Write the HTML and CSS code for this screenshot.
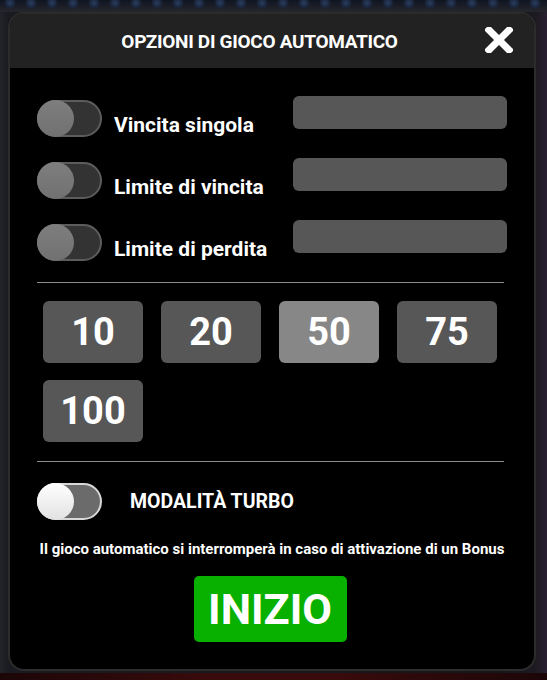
FILE: index.html
```html
<!DOCTYPE html>
<html lang="it">
<head>
    <meta charset="UTF-8">
    <meta name="viewport" content="width=device-width, initial-scale=1.0">
    <title>Opzioni di gioco automatico</title>
    <link rel="stylesheet" href="styles.css">
</head>
<body>
    <div class="game-top"></div>

    <div class="modal">
        <div class="modal-head">
            <h1>OPZIONI DI GIOCO AUTOMATICO</h1>
            <button class="close" aria-label="Chiudi">
                <svg width="28" height="26" viewBox="0 0 28 26">
                    <path d="M4 3 L24 23 M24 3 L4 23" stroke="#fff" stroke-width="7" stroke-linecap="square"/>
                </svg>
            </button>
        </div>

        <div class="modal-body">
            <div class="limit-row">
                <span class="toggle"></span>
                <label>Vincita singola</label>
                <input type="text" class="limit-input">
            </div>
            <div class="limit-row">
                <span class="toggle"></span>
                <label>Limite di vincita</label>
                <input type="text" class="limit-input">
            </div>
            <div class="limit-row">
                <span class="toggle"></span>
                <label>Limite di perdita</label>
                <input type="text" class="limit-input">
            </div>

            <hr class="sep sep-top">

            <div class="spins">
                <button class="spin">10</button>
                <button class="spin">20</button>
                <button class="spin selected">50</button>
                <button class="spin">75</button>
                <button class="spin">100</button>
            </div>

            <hr class="sep sep-bottom">

            <div class="turbo-row">
                <span class="toggle toggle-on"></span>
                <span class="turbo-label">MODALITÀ TURBO</span>
            </div>

            <p class="note">Il gioco automatico si interromperà in caso di attivazione di un Bonus</p>

            <div class="start-wrap">
                <button class="start">INIZIO</button>
            </div>
        </div>
    </div>

    <div class="game-bottom">VINCITA</div>
</body>
</html>
```

FILE: styles.css
```css
* { box-sizing: border-box; }
body { margin: 0; height: 680px; overflow: hidden; font-family: Roboto, "Liberation Sans", sans-serif; color: #fff; background: linear-gradient(90deg, #23242a 0, #1a1b20 8px, #15151a 500px, #1d1a22 536px, #2a2233 100%); }

.game-top { height: 12px; background: radial-gradient(circle at 10px 3px, #2b3d5c 0, #1b2740 4px, transparent 6px) 0 0 / 21px 12px, linear-gradient(#101522, #26272c); }

.modal { width: 528px; margin-left: 8px; border: 2px solid #2c2c2c; border-radius: 16px; overflow: hidden; background: #000; }

.modal-head { height: 54px; background: #222; display: flex; align-items: center; padding: 0 21px 0 24px; }
.modal-head h1 { flex: 1; margin: 0; text-align: center; font-size: 19px; font-weight: 700; letter-spacing: -0.3px; }
.close { background: none; border: none; padding: 0; width: 28px; height: 26px; margin-bottom: 3px; cursor: pointer; }
.close svg { display: block; }

.modal-body { padding: 28px 27px 27px; }

.limit-row { display: flex; height: 41px; margin-bottom: 21px; }
.limit-row:last-of-type { margin-bottom: 0; }
.limit-row .toggle { align-self: flex-end; }
.limit-row label { align-self: flex-end; flex: 1; margin-left: 12px; font-size: 21px; font-weight: 700; line-height: 24px; }
.limit-input { align-self: flex-start; width: 214px; height: 33px; border: none; border-radius: 6px; background: #575757; }

.toggle { position: relative; display: block; width: 65px; height: 37px; border: 2px solid #5c5c5c; border-radius: 19px; background: #333; }
.toggle::after { content: ""; position: absolute; left: -2px; top: -2px; width: 37px; height: 37px; border-radius: 50%; background: linear-gradient(#7e7e7e, #717171); }
.toggle-on { border-color: #d8d8d8; background: #6b6b6b; }
.toggle-on::after { background: linear-gradient(#fff, #e2e2e2); }

.sep { border: none; height: 1px; background: #8c8c8c; margin: 0 3px 0 0; }
.sep-top { margin-top: 20px; }
.sep-bottom { margin-top: 19px; }

.spins { display: grid; grid-template-columns: repeat(4, 100px); gap: 17px 18px; margin: 18px 0 0 6px; }
.spin { height: 62px; border: none; border-radius: 6px; background: #575757; color: #fff; font-family: inherit; font-size: 38px; font-weight: 700; cursor: pointer; }
.spin.selected { background: #878787; }

.turbo-row { display: flex; align-items: center; margin-top: 21px; height: 36px; }
.turbo-label { margin-left: 28px; font-size: 19.5px; font-weight: 700; }

.note { margin: 22px 0 0; font-size: 15px; font-weight: 700; line-height: 17px; text-align: center; }

.start-wrap { display: flex; justify-content: center; margin: 18px 4px 0 0; }
.start { width: 153px; height: 66px; border: none; border-radius: 5px; background: #08b000; color: #fff; font-family: inherit; font-size: 43px; font-weight: 700; cursor: pointer; }

.game-bottom { margin-top: 2px; height: 20px; background: linear-gradient(90deg, #1c0608, #3a0b0c 40%, #3a0b0c 60%, #1c0608); color: #6a5214; font-size: 14px; font-weight: 700; text-align: center; line-height: 20px; padding-top: 3px; }
```
